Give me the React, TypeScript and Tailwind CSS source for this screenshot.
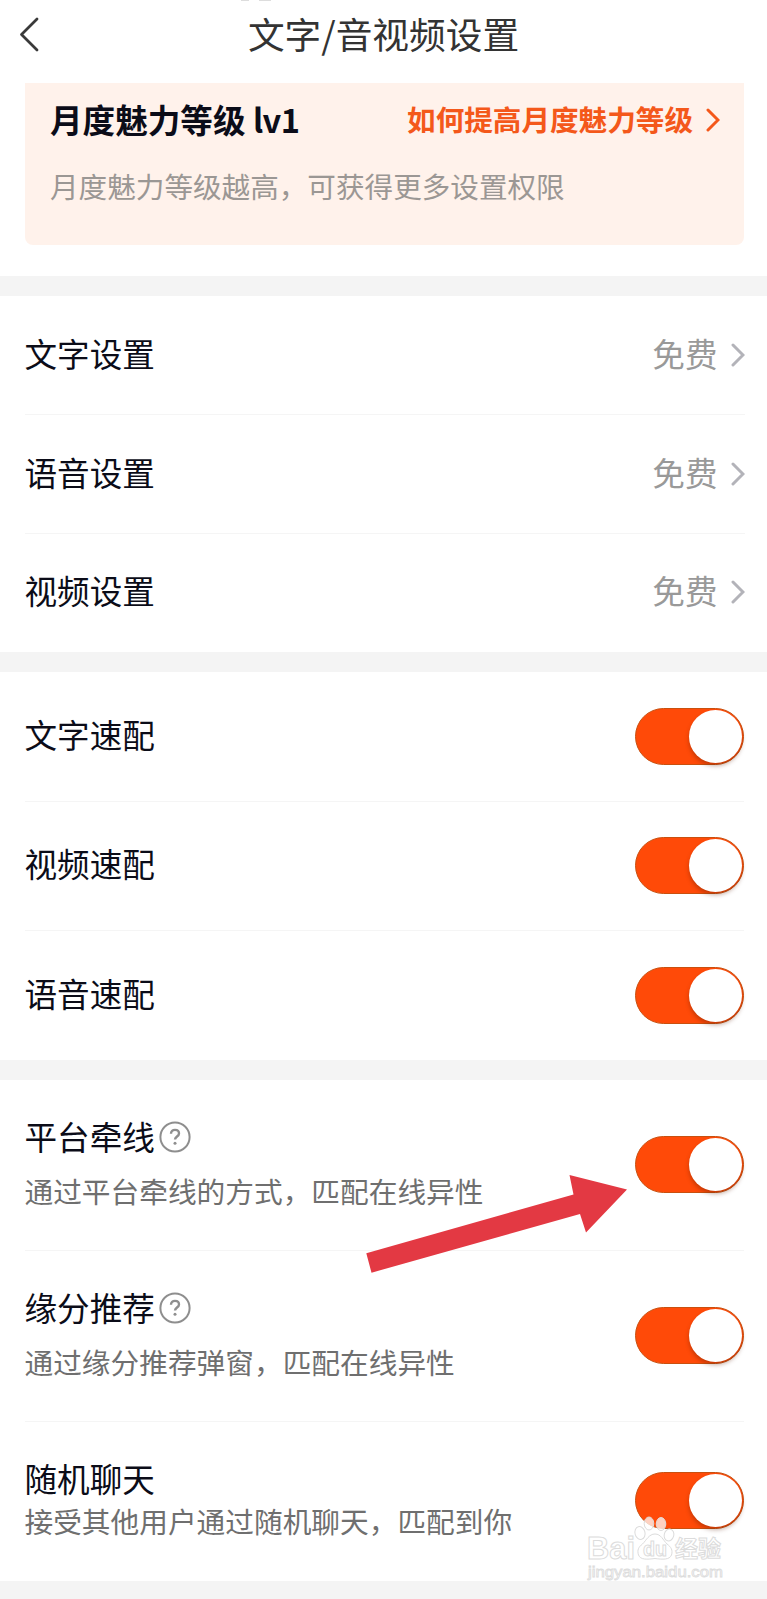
import React, { useState } from "react";

interface ChevronProps {
  className: string;
}

const Chevron: React.FC<ChevronProps> = ({ className }) => (
  <svg
    viewBox="0 0 14 24"
    width={14}
    height={24}
    fill="none"
    stroke="currentColor"
    strokeWidth={3}
    strokeLinecap="round"
    className={className}
  >
    <path d="M2 2l10 10L2 22" />
  </svg>
);

interface SwitchProps {
  checked: boolean;
  onChange: () => void;
}

const Switch: React.FC<SwitchProps> = ({ checked, onChange }) => (
  <button
    type="button"
    role="switch"
    aria-checked={checked}
    onClick={onChange}
    className={`flex h-[57px] w-[109px] shrink-0 items-center rounded-full border border-[#c9500f] px-px ${
      checked ? "justify-end bg-[#ff4a08]" : "justify-start bg-gray-200"
    }`}
  >
    <span className="size-[53px] rounded-full bg-white shadow-[0_3px_4px_rgba(90,30,0,0.35)]" />
  </button>
);

const HelpIcon: React.FC = () => (
  <svg viewBox="0 0 32 32" width={32} height={32} fill="none" stroke="#8e8e8e" className="ml-1 mt-[3px]">
    <circle cx="16" cy="16" r="14.6" strokeWidth={2} />
    <path d="M12 12.800c0-2.500 1.700-3.900 4-3.900s4 1.400 4 3.500c0 3-4 3.200-4 6.200" strokeWidth={2.4} />
    <circle cx="16" cy="22.300" r="1.500" fill="#8e8e8e" stroke="none" />
  </svg>
);

const Watermark: React.FC = () => (
  <svg
    viewBox="0 0 150 75"
    width={150}
    height={75}
    className="pointer-events-none absolute left-[580px] top-[1510px]"
  >
    <g fill="#ffffff" fillOpacity={0.75} stroke="#dcdcdc" strokeWidth={1}>
      <text
        x="7"
        y="49"
        fontSize="31"
        fontWeight="700"
        textLength="48"
        lengthAdjust="spacingAndGlyphs"
        fontFamily="Liberation Sans, sans-serif"
      >
        Bai
      </text>
      <ellipse cx="60" cy="23" rx="5" ry="6.500" transform="rotate(-15 60 23)" />
      <ellipse cx="69" cy="13.500" rx="4.800" ry="6.500" />
      <ellipse cx="81" cy="14" rx="4.800" ry="6.500" />
      <ellipse cx="89" cy="25" rx="4.800" ry="6" transform="rotate(15 89 25)" />
      <path d="M75 24c6 0 8 6 12 10 4 3 6 6 4.500 11-2 5-9 4.500-16.500 3.500-8 1-14.500 1.500-16.500-3.500-1.500-5 0-8 4-11 4-4 6.500-10 12.500-10z" />
      <text
        x="63"
        y="46"
        fontSize="20"
        fontWeight="700"
        textLength="24"
        lengthAdjust="spacingAndGlyphs"
        fontFamily="Liberation Sans, sans-serif"
      >
        du
      </text>
      <text x="95" y="46.500" fontSize="23" fontWeight="700" textLength="46" fontFamily="Noto Sans CJK SC, sans-serif">
        经验
      </text>
      <text
        x="8"
        y="67"
        fontSize="14.500"
        textLength="135"
        lengthAdjust="spacingAndGlyphs"
        strokeWidth={0.8}
        fontFamily="Liberation Sans, sans-serif"
      >
        jingyan.baidu.com
      </text>
    </g>
  </svg>
);

const prices = [
  { id: "text", label: "文字设置", value: "免费" },
  { id: "voice", label: "语音设置", value: "免费" },
  { id: "video", label: "视频设置", value: "免费" },
];

const quickMatches = [
  { id: "quickText", label: "文字速配" },
  { id: "quickVideo", label: "视频速配" },
  { id: "quickVoice", label: "语音速配" },
];

export default function App() {
  const [enabled, setEnabled] = useState<Record<string, boolean>>({
    quickText: true,
    quickVideo: true,
    quickVoice: true,
    platform: true,
    fate: true,
    random: true,
  });

  const toggle = (id: string) => {
    setEnabled({ ...enabled, [id]: !enabled[id] });
  };

  return (
    <div className="relative h-[1599px] w-[767px] overflow-hidden bg-[#f4f4f4] font-['Noto_Sans_CJK_SC',sans-serif] text-[32.6px] leading-[48px] text-[#0b0c18]">
      {/* Header */}
      <header className="grid h-[83px] grid-cols-[60px_1fr_60px] bg-white">
        <svg
          viewBox="0 0 20 36"
          width={20}
          height={36}
          fill="none"
          stroke="#3a3a3a"
          strokeWidth={2.8}
          strokeLinecap="round"
          strokeLinejoin="round"
          className="ml-[19px] mt-[16px]"
        >
          <path d="M18 3L2.500 18.500 18 34" />
        </svg>
        <h1 className="mt-[9px] text-center text-[36.7px] leading-[48px] text-[#333333]">
          文字/音视频设置
        </h1>
      </header>

      {/* Charm level */}
      <section className="h-[193px] bg-white pl-[25px] pr-[23px]">
        <div className="h-[162px] rounded-b-lg bg-[#fff2eb] px-[25px] pt-[12px]">
          <div className="flex items-center justify-between">
            <h2 className="font-bold">
              月度魅力等级 <span className="tracking-[-0.6px]">lv1</span>
            </h2>
            <div className="mr-[-1px] flex items-center text-[28.6px] font-bold text-[#f4581a]">
              如何提高月度魅力等级
              <Chevron className="ml-[13px] mt-px" />
            </div>
          </div>
          <p className="mt-[19px] text-[28.6px] text-[#9b9794]">
            月度魅力等级越高，可获得更多设置权限
          </p>
        </div>
      </section>

      {/* Prices */}
      <section className="mt-5 h-[356px] bg-white pl-[24.500px] pr-[22.500px]">
        {prices.map((item) => (
          <div
            key={item.id}
            className="flex h-[119px] items-center justify-between border-b border-[#f5f5f5] last:h-[116px] last:border-0"
          >
            <span className="mb-1">{item.label}</span>
            <span className="flex items-center text-[#999999]">
              <span className="mb-1">{item.value}</span>
              <Chevron className="ml-[13px] text-[#b3b3b9]" />
            </span>
          </div>
        ))}
      </section>

      {/* Quick match */}
      <section className="mt-5 h-[388px] bg-white pl-[24.500px] pr-[23px]">
        {quickMatches.map((item) => (
          <div
            key={item.id}
            className="flex h-[129.500px] items-center justify-between border-b border-[#f5f5f5] last:border-0"
          >
            <span className="mb-[5px]">{item.label}</span>
            <Switch checked={enabled[item.id]} onChange={() => toggle(item.id)} />
          </div>
        ))}
      </section>

      {/* Recommendations */}
      <section className="mt-5 h-[501px] bg-white pl-[24.500px] pr-[23px]">
        <div className="flex h-[171px] items-center justify-between border-b border-[#f5f5f5] pb-[2px]">
          <div className="mb-[2px]">
            <div className="flex items-center">
              平台牵线
              <HelpIcon />
            </div>
            <p className="mt-[7px] text-[28.700px] text-[#6f6f6f]">通过平台牵线的方式，匹配在线异性</p>
          </div>
          <Switch checked={enabled.platform} onChange={() => toggle("platform")} />
        </div>
        <div className="flex h-[171px] items-center justify-between border-b border-[#f5f5f5] pb-[2px]">
          <div className="mb-[2px]">
            <div className="flex items-center">
              缘分推荐
              <HelpIcon />
            </div>
            <p className="mt-[7px] text-[28.700px] text-[#6f6f6f]">通过缘分推荐弹窗，匹配在线异性</p>
          </div>
          <Switch checked={enabled.fate} onChange={() => toggle("fate")} />
        </div>
        <div className="flex h-[159px] items-center justify-between pb-[2px]">
          <div className="mb-[2px]">
            <div>随机聊天</div>
            <p className="-mt-[5px] text-[28.700px] text-[#6f6f6f]">接受其他用户通过随机聊天，匹配到你</p>
          </div>
          <Switch checked={enabled.random} onChange={() => toggle("random")} />
        </div>
      </section>

      {/* Sliver of the status bar */}
      <div className="absolute left-[241px] top-0 flex gap-2.5">
        <span className="h-px w-2 bg-[#dddddd]" />
        <span className="h-px w-3 bg-[#dddddd]" />
      </div>

      {/* Pointer arrow over the list */}
      <svg
        viewBox="0 0 262 98"
        width={262}
        height={98}
        className="pointer-events-none absolute left-[366px] top-[1175px]"
      >
        <path d="M0.300 78.300L207.500 19.500 203.500 0 261 14.500 220 57.500 214 39 5.500 97.700z" fill="#e33943" />
      </svg>

      <Watermark />
    </div>
  );
}
